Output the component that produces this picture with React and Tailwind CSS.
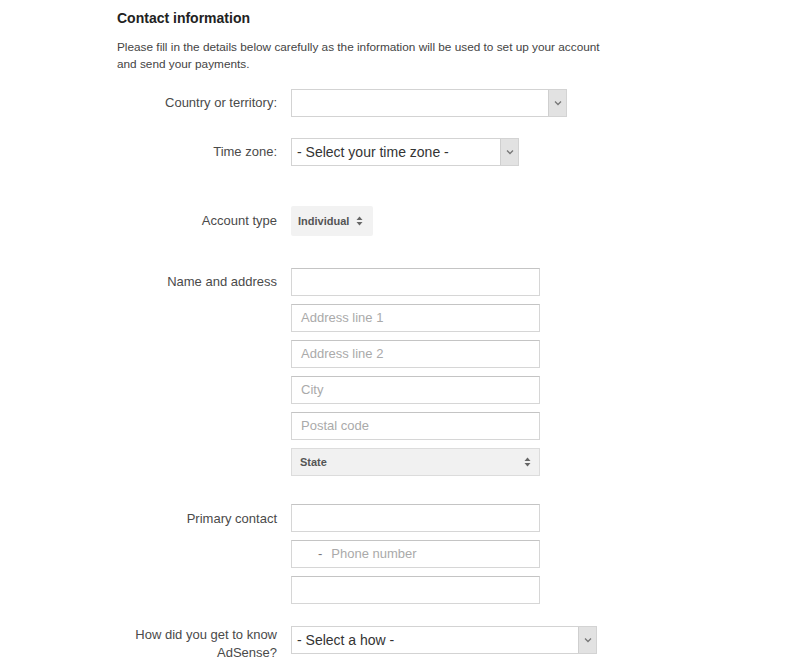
import React from "react";

const font = { fontFamily: '"Liberation Sans", Arial, sans-serif' };

function Arrow() {
  return (
    <div className="flex h-full w-[18px] items-center justify-center border-l border-[#cfcfcf] bg-[#e2e2e2]">
      <svg width="8" height="6" viewBox="0 0 8 6">
        <path d="M1 1.5 L4 4.5 L7 1.5" fill="none" stroke="#777" strokeWidth="1.3" />
      </svg>
    </div>
  );
}

function UpDown({ color = "#666" }) {
  return (
    <svg width="7" height="10" viewBox="0 0 7 10">
      <path d="M3.5 0.5 L6.5 4 L0.5 4 Z" fill={color} />
      <path d="M3.5 9.5 L6.5 6 L0.5 6 Z" fill={color} />
    </svg>
  );
}

function Row({ label, children, labelClass = "items-center", labelPad = "", className = "" }) {
  return (
    <div className={`flex ${labelClass} ${className}`}>
      <div className={`w-[291px] shrink-0 pr-[14px] text-right text-[13px] leading-[18px] text-[#4a4a4a] ${labelPad}`}>
        {label}
      </div>
      <div>{children}</div>
    </div>
  );
}

function Select({ width, value }) {
  return (
    <div
      className="flex h-[28px] items-stretch border border-[#d3d3d3] bg-white"
      style={{ width }}
    >
      <div className="flex flex-1 items-center px-[5px] text-[14px] text-[#333]">{value}</div>
      <Arrow />
    </div>
  );
}

function Input({ placeholder, className = "" }) {
  return (
    <div
      className={`flex h-[28px] w-[249px] items-center border border-[#d6d6d6] border-t-[#c4c4c4] bg-white px-[9px] text-[13px] text-[#aaa] ${className}`}
    >
      {placeholder}
    </div>
  );
}

export default function App() {
  return (
    <div className="min-h-[667px] w-[805px] bg-white pt-[10px]" style={font}>
      <div className="pl-[117px]">
        <h2 className="text-[14px] font-bold leading-[16px] text-[#222]">Contact information</h2>
        <p className="mt-[13px] text-[11.8px] leading-[17px] text-[#444]">
          Please fill in the details below carefully as the information will be used to set up your account
          <br />
          and send your payments.
        </p>
      </div>

      <Row label="Country or territory:" className="mt-[16px]">
        <Select width={276} value="" />
      </Row>

      <Row label="Time zone:" className="mt-[21px]">
        <Select width={228} value="- Select your time zone -" />
      </Row>

      <Row label="Account type" className="mt-[40px]">
        <div className="flex h-[30px] w-[82px] items-center gap-[7px] rounded-[2px] bg-[#f2f2f2] px-[7px] text-[11px] font-bold text-[#555]">
          Individual
          <UpDown />
        </div>
      </Row>

      <Row label="Name and address" labelClass="items-start" labelPad="pt-[5px]" className="mt-[32px]">
        <div className="flex flex-col gap-[8px]">
          <Input />
          <Input placeholder="Address line 1" />
          <Input placeholder="Address line 2" />
          <Input placeholder="City" />
          <Input placeholder="Postal code" />
          <div className="flex h-[28px] w-[249px] items-center justify-between border border-[#dcdcdc] bg-[#f1f1f1] px-[8px] text-[11px] font-bold text-[#555]">
            State
            <UpDown />
          </div>
        </div>
      </Row>

      <Row label="Primary contact" labelClass="items-start" labelPad="pt-[6px]" className="mt-[28px]">
        <div className="flex flex-col gap-[8px]">
          <Input />
          <Input
            className="pl-[26px]"
            placeholder={
              <span>
                <span className="mr-[9px] text-[#777]">-</span>Phone number
              </span>
            }
          />
          <Input />
        </div>
      </Row>

      <Row
        label={
          <span>
            How did you get to know
            <br />
            AdSense?
          </span>
        }
        labelClass="items-start"
        className="mt-[22px]"
      >
        <Select width={306} value="- Select a how -" />
      </Row>
    </div>
  );
}
